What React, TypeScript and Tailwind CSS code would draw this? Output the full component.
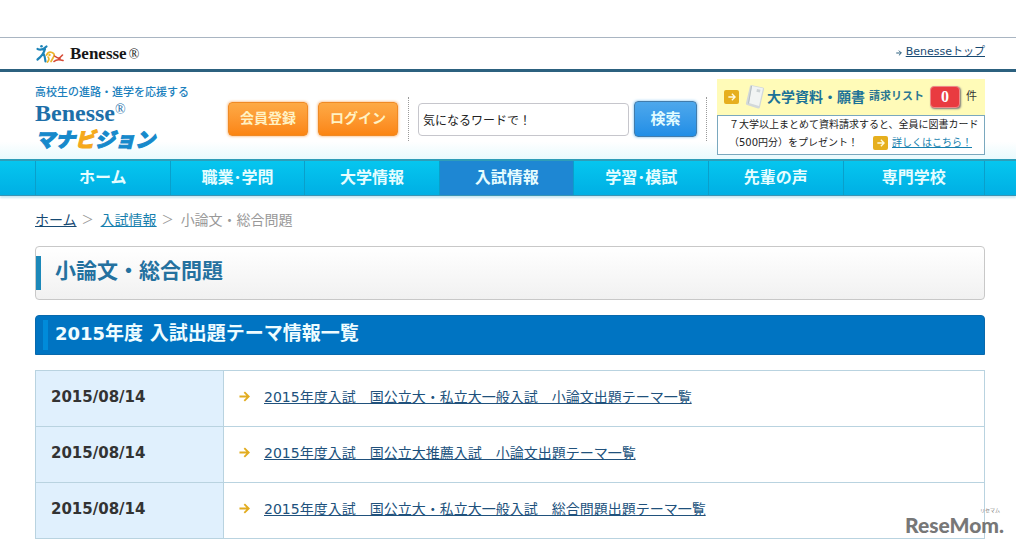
import React from "react";
import { clsx } from "clsx";

type NavItem = { key: string; label: string };
type Entry = { date: string; title: string };

const navItems: NavItem[] = [
  { key: "home", label: "ホーム" },
  { key: "work", label: "職業･学問" },
  { key: "univ", label: "大学情報" },
  { key: "exam", label: "入試情報" },
  { key: "study", label: "学習･模試" },
  { key: "voice", label: "先輩の声" },
  { key: "college", label: "専門学校" },
];

const entries: Entry[] = [
  { date: "2015/08/14", title: "2015年度入試　国公立大・私立大一般入試　小論文出題テーマ一覧" },
  { date: "2015/08/14", title: "2015年度入試　国公立大推薦入試　小論文出題テーマ一覧" },
  { date: "2015/08/14", title: "2015年度入試　国公立大・私立大一般入試　総合問題出題テーマ一覧" },
];

const Arrow = ({ className }: { className?: string }) => (
  <svg viewBox="0 0 12 12" fill="none" stroke="currentColor" strokeWidth="2" className={className} aria-hidden="true">
    <path d="M0.5 6H10.5M5.8 1.2L10.6 6L5.8 10.8" />
  </svg>
);

const ArrowBox = () => (
  <span className="flex h-[14px] w-[15px] shrink-0 items-center justify-center rounded-xs bg-[#e6af1e] text-[#fffbe0]">
    <Arrow className="h-2 w-2" />
  </span>
);

const BenesseMark = () => (
  <svg viewBox="0 0 29 20" className="h-5 w-[29px]" fill="none" strokeLinecap="round" aria-hidden="true">
    <path d="M2.500 5Q7 7 11.500 2.500M10 5Q8.500 11 2.500 15.500M8.500 9.500Q10 12 10.500 17.500" stroke="#1d84b8" strokeWidth="2.200" />
    <circle cx="6.500" cy="2.200" r="1.300" fill="#1d84b8" />
    <path d="M11.500 11Q13.500 7 17 8.500T18.500 13M13 13Q15 15 12.500 18M18.500 13L16 17.500" stroke="#ecb62c" strokeWidth="1.700" />
    <circle cx="14.500" cy="11" r="1.200" fill="#ecb62c" />
    <path d="M19 17.500Q22 14.500 28 16.500M19.500 12Q22 14 25 14.500M23.500 15L27.500 11" stroke="#d64a35" strokeWidth="1.600" />
  </svg>
);

const Booklet = () => (
  <svg viewBox="0 0 20 26" className="h-[26px] w-5" aria-hidden="true">
    <path d="M6 1L18 3.500Q19.500 4 19 5.500L15 23Q14.500 25 13 24.500L2 21Q0.500 20.500 1 19L5 2Z" fill="#d2d8da" />
    <path d="M7 2L18 4.200L14 22L4 19Z" fill="#f1f4f3" />
    <path d="M6.500 2L3.500 19.500" stroke="#b5bec2" />
    <path d="M12 5L15.500 5.800L14.800 8.500L11.400 7.700Z" fill="#cbd2d4" />
  </svg>
);

const TopBar = () => (
  <div className="flex h-[35px] items-center justify-between border-t border-b-3 border-t-[#a9b5c2] border-b-[#2c617f] pr-[31px] pl-[35px]">
    <a href="#" className="flex items-center gap-1.5 font-['Liberation_Serif',serif] text-[17px] font-bold text-[#171717]">
      <BenesseMark />
      <span>
        Benesse<span className="ml-0.5 text-sm font-normal">®</span>
      </span>
    </a>
    <div className="flex items-center gap-1 pb-0.5 text-[11px]">
      <Arrow className="h-[6px] w-[6px] text-[#2c617f]" />
      <a href="#" className="text-[#174a73] underline">Benesseトップ</a>
    </div>
  </div>
);

const SiteHeader = () => (
  <header className="flex h-[87px] items-start bg-linear-to-b from-white from-80% to-[#e9fafd] pt-[7px] pr-[31px] pl-[35px]">
    <a href="#" className="flex w-[193px] shrink-0 flex-col pt-[7px] text-[#1b7fbd]">
      <span className="text-[11px] leading-[14px] font-medium">高校生の進路・進学を応援する</span>
      <span className="flex items-start font-['Liberation_Serif',serif] text-2xl leading-[26px] font-bold text-[#1d6fa9]">
        Benesse<span className="text-sm leading-5 font-normal">®</span>
      </span>
      <span className="text-[20px] leading-7 font-black text-[#1689cb] italic [-webkit-text-stroke:1px_currentColor]">
        マナ<span className="text-[#f5a91c]">ビ</span>ジョン
      </span>
    </a>

    <div className="flex shrink-0 gap-2.5 pt-[23px] text-sm font-bold text-[#fff2c4]">
      <button className="h-[34px] w-20 rounded-sm border border-[#f08a24] bg-linear-to-b from-[#fdaa45] to-[#fb8511] pb-0.5 shadow-[0_0_3px_#f5a04e]">会員登録</button>
      <button className="h-[34px] w-20 rounded-sm border border-[#f08a24] bg-linear-to-b from-[#fdaa45] to-[#fb8511] pb-0.5 shadow-[0_0_3px_#f5a04e]">ログイン</button>
    </div>

    <form className="mx-2.5 mt-[18px] flex h-11 min-w-0 flex-1 items-center gap-[5px] border-x border-dotted border-[#9a9a9a] px-[9px]" onSubmit={(e) => e.preventDefault()}>
      <input
        type="text"
        aria-label="キーワード"
        defaultValue="気になるワードで！"
        className="h-[33px] min-w-0 flex-1 rounded-sm border border-[#c6c6cc] bg-white px-1 text-xs text-[#222]"
      />
      <button className="h-9 w-[63px] shrink-0 rounded-sm border border-[#427cab] bg-linear-to-b from-[#4da8ec] to-[#1f8ee6] text-[15px] font-bold text-[#e2fcff] shadow-[0_0_3px_#65b7ee]">検索</button>
    </form>

    <div className="w-[268px] shrink-0">
      <div className="flex h-9 items-center bg-[#fffbb8] pl-[7px]">
        <ArrowBox />
        <span className="ml-1.5"><Booklet /></span>
        <a href="#" className="ml-0.5 text-sm font-bold whitespace-nowrap text-[#1b7297]">大学資料・願書</a>
        <span className="ml-1 text-[11px] font-bold whitespace-nowrap text-[#2b7792]">請求リスト</span>
        <span className="ml-1.5 flex h-[22px] w-[30px] items-center justify-center rounded-sm border border-[#e88] bg-[#e93b40] font-['Liberation_Serif',serif] text-base font-bold text-white shadow-[1px_1px_2px_#777]">0</span>
        <span className="ml-1.5 text-[11px] text-[#333]">件</span>
      </div>
      <div className="h-10 border border-[#7aa8be] bg-white pl-[11px] text-[10px] leading-[18px] whitespace-nowrap text-[#222]">
        <p>７大学以上まとめて資料請求すると、全員に図書カード</p>
        <p className="flex items-center">
          （500円分）をプレゼント！
          <span className="mr-1 ml-auto"><ArrowBox /></span>
          <a href="#" className="mr-3 text-[#167fae] underline">詳しくはこちら！</a>
        </p>
      </div>
    </div>
  </header>
);

const GlobalNav = () => (
  <nav className="border-t-2 border-b border-t-[#2f9db8] border-b-[#3a94b4] bg-linear-to-b from-[#06c6ef] to-[#00afe4] pr-[31px] pl-[35px] shadow-[0_2px_2px_#c9e8f3]">
    <ul className="flex h-[34px] border-x border-[#0a9fca]">
      {navItems.map((item) => (
        <li key={item.key} className="w-[14.2%] border-r border-[#0a9fca] last:flex-1 last:border-r-0">
          <a
            href="#"
            className={clsx(
              "flex h-full items-center justify-center text-base font-bold text-[#e6fdff]",
              item.key === "exam" && "bg-[#1e87d3]"
            )}
          >
            {item.label}
          </a>
        </li>
      ))}
    </ul>
  </nav>
);

const Breadcrumb = () => (
  <div className="flex h-12 items-center gap-[5px] text-sm text-[#999]">
    <a href="#" className="text-[#174a73] underline">ホーム</a>
    <span className="text-xs">＞</span>
    <a href="#" className="ml-0.5 text-[#167fae] underline">入試情報</a>
    <span className="text-xs">＞</span>
    <span className="ml-0.5">小論文・総合問題</span>
  </div>
);

const App = () => (
  <div className="relative bg-white pt-[37px] font-['DejaVu_Sans','Noto_Sans_CJK_JP',sans-serif]">
    <TopBar />
    <SiteHeader />
    <GlobalNav />

    <main className="pr-[31px] pb-2 pl-[35px]">
      <Breadcrumb />

      <h1 className="mt-0.5 flex h-[54px] items-center rounded-sm border border-[#c8c8c8] bg-linear-to-b from-white to-[#f1f1f1] text-[21px] font-bold text-[#24719f]">
        <span className="mr-3.5 h-[34px] w-[5px] bg-[#1c88b9]" />
        <span className="pb-0.5">小論文・総合問題</span>
      </h1>

      <h2 className="mt-[15px] flex h-10 items-center rounded-t-sm border border-[#0869ad] bg-[#0074c2] pl-[7px] text-[19px] font-bold text-[#effcff]">
        <span className="mr-[7px] h-[30px] w-[5px] bg-[#008bda]" />
        <span className="pb-1">
          <span className="text-lg">2015</span>年度 入試出題テーマ情報一覧
        </span>
      </h2>

      <table className="mt-[15px] w-full border-collapse text-sm">
        <tbody>
          {entries.map((entry) => (
            <tr key={entry.title} className="h-14">
              <th scope="row" className="w-[188px] border border-[#b9d3e0] bg-[#e0f0fd] pb-0.5 pl-[15px] text-left text-[15px] font-bold text-[#333]">
                {entry.date}
              </th>
              <td className="border border-[#b9d3e0] pb-1 pl-[15px]">
                <div className="flex items-center gap-3.5">
                  <Arrow className="h-[11px] w-[11px] text-[#e2ac20]" />
                  <a href="#" className="text-[#20517c] underline">{entry.title}</a>
                </div>
              </td>
            </tr>
          ))}
        </tbody>
      </table>
    </main>

    {/* Watermark over the table corner */}
    <div className="absolute right-3 bottom-3 flex flex-col items-end gap-0.5 text-[#777]">
      <span className="pr-1 text-[5px] leading-[6px]">リセマム</span>
      <span className="font-['Lato',sans-serif] text-[21px] leading-5 font-black">ReseMom.</span>
    </div>
  </div>
);

export default App;
